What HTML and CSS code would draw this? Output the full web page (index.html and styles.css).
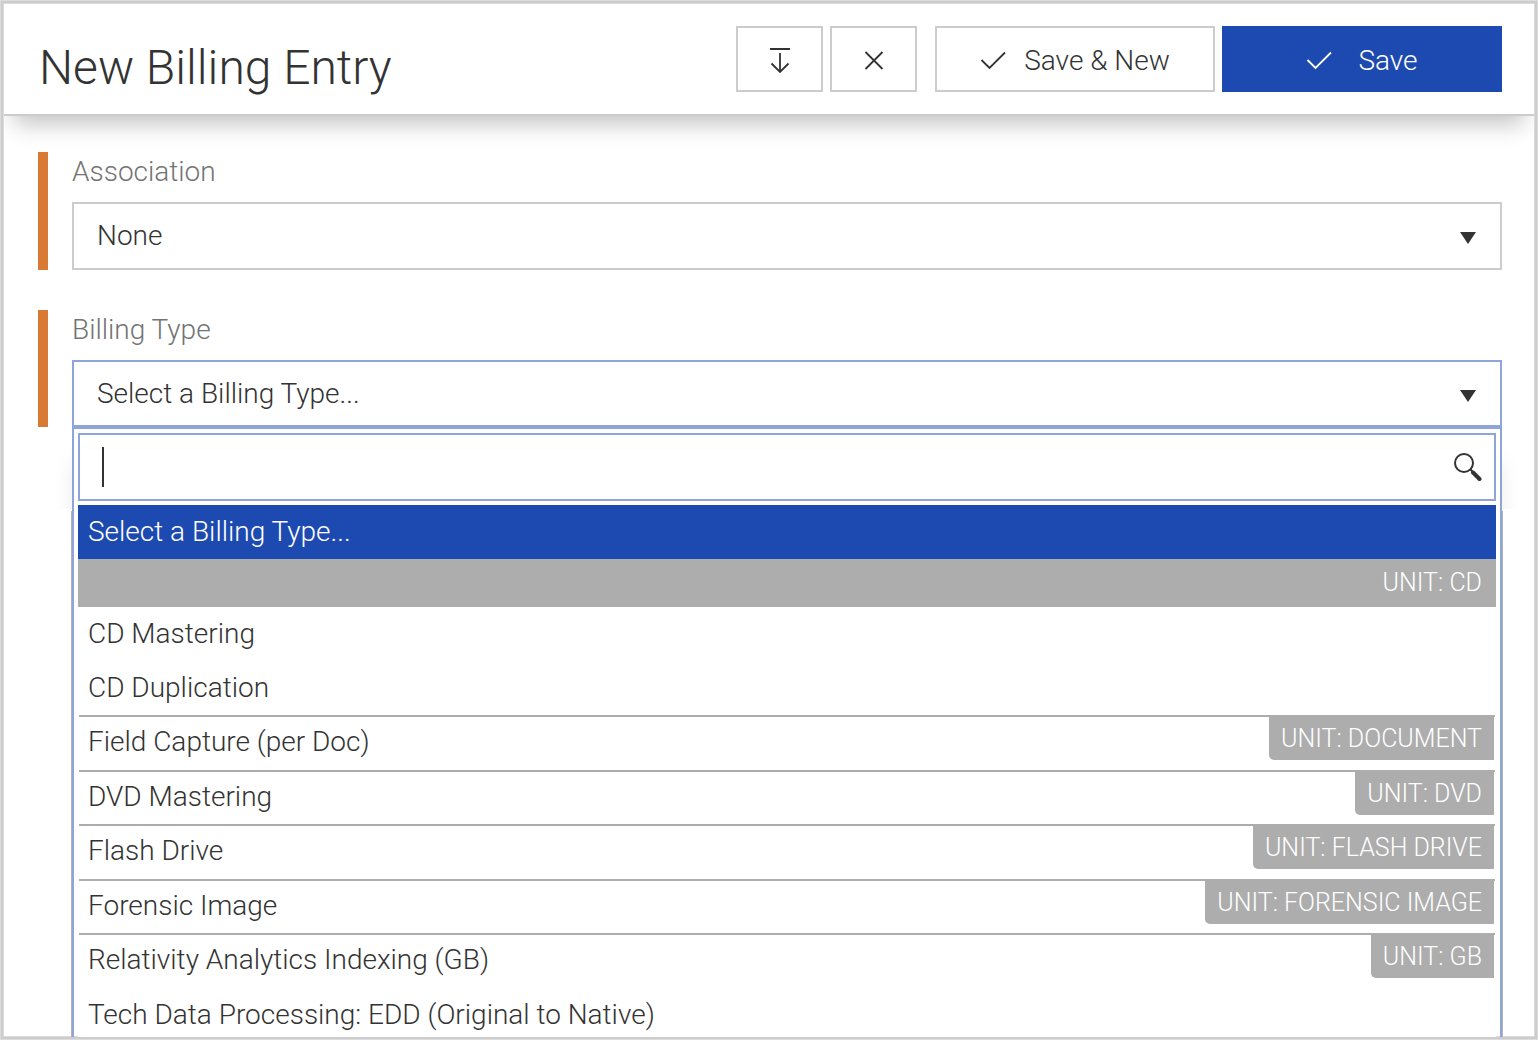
FILE: index.html
```html
<!DOCTYPE html>
<html lang="en">
<head>
<meta charset="utf-8">
<title>New Billing Entry</title>
<link rel="stylesheet" href="styles.css">
</head>
<body>
<form class="panel">
  <header class="header">
    <h1 class="title">New Billing Entry</h1>
    <div class="actions">
      <button type="button" class="btn btn-icon" aria-label="Dock panel">
        <svg class="icon" viewBox="0 0 26 26" aria-hidden="true"><path d="M3 1h20M13 5v18.500M4.500 15.500l8.500 8.500 8.500-8.500"/></svg>
      </button>
      <button type="button" class="btn btn-icon" aria-label="Close">
        <svg class="icon" viewBox="0 0 26 26" aria-hidden="true"><path d="M4.500 4l17 17M21.500 4l-17 17"/></svg>
      </button>
      <button type="button" class="btn btn-wide btn-secondary">
        <svg class="icon" viewBox="0 0 26 26" aria-hidden="true"><path d="M1.500 12l8 8L25 4.500"/></svg>
        Save &amp; New
      </button>
      <button type="submit" class="btn btn-wide btn-primary">
        <svg class="icon" viewBox="0 0 26 26" aria-hidden="true"><path d="M1.500 12l8 8L25 4.500"/></svg>
        Save
      </button>
    </div>
  </header>

  <main class="content">
    <div class="field">
      <label class="label" for="association">Association</label>
      <div class="select-wrap">
        <select class="select" id="association"><option>None</option></select>
        <svg class="arrow" viewBox="0 0 16 12" aria-hidden="true"><path d="M0 0h16L8 12z"/></svg>
      </div>
    </div>

    <div class="field">
      <label class="label" for="billing-type">Billing Type</label>
      <div class="select-wrap">
        <select class="select select-open" id="billing-type"><option>Select a Billing Type...</option></select>
        <svg class="arrow" viewBox="0 0 16 12" aria-hidden="true"><path d="M0 0h16L8 12z"/></svg>
      </div>
    </div>

    <div class="menu">
      <div class="search">
        <span class="caret"></span>
        <input class="search-input" type="text" aria-label="Search billing types">
        <svg class="search-icon" viewBox="0 0 30 30" aria-hidden="true"><circle cx="12" cy="11" r="9"/><path class="neck" d="M18 17l3 3"/><path class="handle" d="M21 20.500l6.500 6.500"/></svg>
      </div>
      <ul class="options" role="listbox" aria-label="Billing types">
        <li class="option option-selected" role="option" aria-selected="true">Select a Billing Type...</li>
        <li class="group-head" role="presentation">UNIT: CD</li>
        <li class="option" role="option">CD Mastering</li>
        <li class="option" role="option">CD Duplication</li>
        <li class="option option-first" role="option">Field Capture (per Doc)<span class="unit">UNIT: DOCUMENT</span></li>
        <li class="option option-first" role="option">DVD Mastering<span class="unit">UNIT: DVD</span></li>
        <li class="option option-first" role="option">Flash Drive<span class="unit">UNIT: FLASH DRIVE</span></li>
        <li class="option option-first" role="option">Forensic Image<span class="unit">UNIT: FORENSIC IMAGE</span></li>
        <li class="option option-first" role="option">Relativity Analytics Indexing (GB)<span class="unit">UNIT: GB</span></li>
        <li class="option" role="option">Tech Data Processing: EDD (Original to Native)</li>
      </ul>
    </div>
  </main>
</form>
</body>
</html>
```
FILE: styles.css
```css
:root {
  --text: #333;
  --muted: #737373;
  --line: #ccc;
  --focus: #8fa5da;
  --blue: #1d4ab1;
  --unit: #adadad;
  --orange: #d87a34;
}

* {
  box-sizing: border-box;
}

body {
  margin: 0;
  border: 1px solid #dcdcdc;
  background: #fff;
  color: var(--text);
  font: 300 28px/34px Roboto, "Liberation Sans", sans-serif;
}

button,
input,
select {
  font: inherit;
  color: inherit;
}

.panel {
  display: flex;
  flex-direction: column;
  height: calc(100vh - 2px);
  border: 2px solid var(--line);
  outline: 1px solid #dcdcdc;
  outline-offset: -3px;
  overflow: hidden;
}

.header {
  display: flex;
  align-items: center;
  justify-content: space-between;
  flex: none;
  height: 113px;
  margin: 0 1px;
  padding: 0 32px 0 35px;
  border-bottom: 2px solid var(--line);
  background: #fff;
  box-shadow: 0 18px 22px -10px rgba(0, 0, 0, 0.24);
}

.title {
  margin: 0;
  padding-top: 18px;
  font-size: 48px;
  line-height: 56px;
  font-weight: 300;
}

.actions {
  display: flex;
  gap: 7px;
}

.btn {
  display: flex;
  align-items: center;
  justify-content: center;
  height: 66px;
  padding: 5px 0 0;
  border: 2px solid var(--line);
  background: #fff;
}

.btn-icon {
  width: 87px;
}

.btn-wide {
  width: 280px;
}

.btn-secondary {
  gap: 18px;
  margin-left: 11px;
}

.btn-primary {
  gap: 26px;
  border-color: var(--blue);
  background: var(--blue);
  color: #fff;
}

.icon {
  width: 26px;
  height: 26px;
  fill: none;
  stroke: currentColor;
  stroke-width: 1.8;
}

.content {
  display: flex;
  flex-direction: column;
  flex: 1;
  min-height: 0;
  padding: 36px 33px 0 35px;
}

.field {
  flex: none;
  margin-bottom: 40px;
  padding-left: 24px;
  border-left: 10px solid var(--orange);
}

.field:has(+ .menu) {
  margin-bottom: 0;
}

.label {
  display: block;
  padding: 3px 0 13px;
  color: var(--muted);
}

.select-wrap {
  display: grid;
  align-items: center;
}

.select {
  grid-area: 1 / 1;
  width: 100%;
  height: 68px;
  padding: 0 23px;
  border: 2px solid var(--line);
  border-radius: 0;
  background: #fff;
  appearance: none;
}

.select-open {
  height: 67px;
  border-color: var(--focus);
}

.arrow {
  grid-area: 1 / 1;
  justify-self: end;
  width: 16px;
  height: 12px;
  margin: 4px 26px 0 0;
  fill: var(--text);
  pointer-events: none;
}

.menu {
  position: relative;
  z-index: 0;
  display: flex;
  flex-direction: column;
  flex: 1;
  min-height: 0;
  margin-left: 34px;
  padding: 4px 4px 0;
  border: 2px solid var(--focus);
  border-bottom: 0;
}

/* edges of the table that lies under the open menu */
.menu::before {
  content: "";
  position: absolute;
  z-index: -1;
  inset: 82px -3px 0;
  border: 1px solid #b4b4b4;
  border-width: 0 1px;
}

.menu::after {
  content: "";
  position: absolute;
  z-index: -1;
  inset: 20px -2px auto;
  height: 60px;
  box-shadow: 0 12px 20px rgba(0, 0, 0, 0.08);
  clip-path: inset(-20px -30px 0);
}

.search {
  display: flex;
  align-items: center;
  flex: none;
  height: 68px;
  margin-bottom: 4px;
  padding: 0 12px 0 22px;
  border: 2px solid var(--focus);
}

.caret {
  width: 2px;
  height: 40px;
  background: var(--text);
}

.search-input {
  flex: 1;
  min-width: 0;
  height: 60px;
  padding: 0;
  border: 0;
  outline: 0;
  background: transparent;
}

.search-icon {
  width: 30px;
  height: 30px;
  fill: none;
  stroke: var(--text);
  stroke-width: 2;
}

.search-icon .handle {
  stroke-width: 4;
  stroke-linecap: round;
}

.options {
  flex: 1;
  min-height: 0;
  margin: 0;
  padding: 0;
  overflow: hidden;
  list-style: none;
  background: #fff;
}

.option {
  display: flex;
  justify-content: space-between;
  height: 54px;
  padding-left: 10px;
  line-height: 54px;
}

.option-selected {
  background: var(--blue);
  color: #fff;
}

.group-head {
  height: 48px;
  padding-right: 14px;
  background: var(--unit);
  color: #fff;
  font-size: 25px;
  line-height: 48px;
  text-align: right;
}

.option-first {
  height: 55px;
  margin: 0 1px;
  padding-left: 9px;
  border-top: 2px solid var(--unit);
  line-height: 50px;
}

.option-first:nth-child(even) {
  height: 54px;
}

.unit {
  height: 43px;
  margin-right: 1px;
  padding: 0 12px;
  border-bottom-left-radius: 5px;
  background: var(--unit);
  color: #fff;
  font-size: 25px;
  line-height: 44px;
}
```
